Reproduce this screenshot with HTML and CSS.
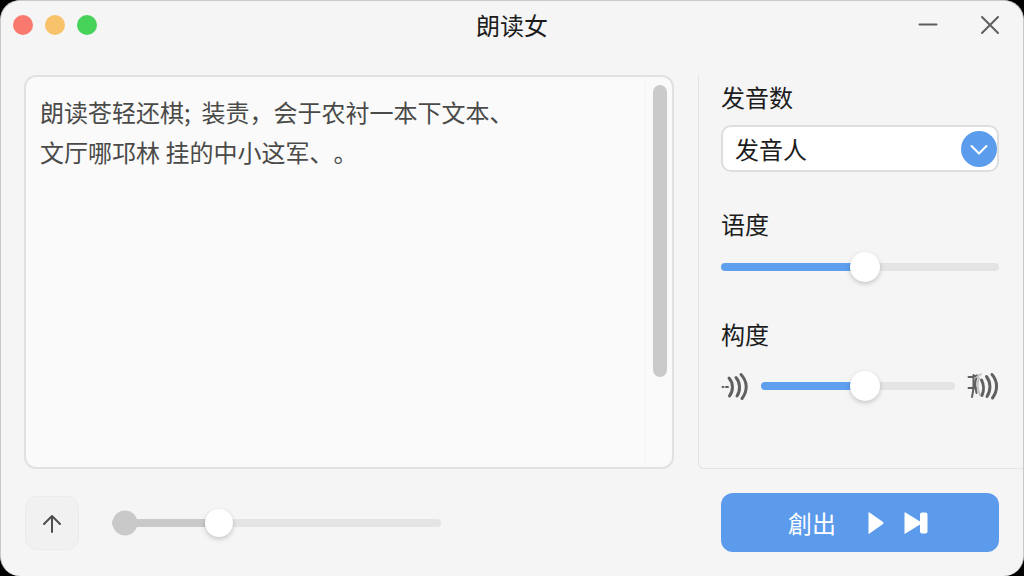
FILE: index.html
```html
<!DOCTYPE html>
<html lang="zh-CN">
<head>
    <meta charset="utf-8">
    <meta name="viewport" content="width=device-width, initial-scale=1.0">
    <title>朗读女</title>
    <link rel="stylesheet" href="styles.css">
</head>
<body>
    <div class="window">
        <header class="titlebar">
            <div class="lights">
                <button class="light red" type="button" aria-label="关闭"></button>
                <button class="light yellow" type="button" aria-label="最小化"></button>
                <button class="light green" type="button" aria-label="最大化"></button>
            </div>
            <h1 class="title">朗读女</h1>
            <div class="window-buttons">
                <button class="icon-button" type="button" aria-label="最小化">
                    <svg width="20" height="20" viewBox="0 0 20 20"><path d="M1.500 9.500h17"/></svg>
                </button>
                <button class="icon-button" type="button" aria-label="关闭">
                    <svg width="20" height="20" viewBox="0 0 20 20"><path d="M2 2l16 16M18 2L2 18"/></svg>
                </button>
            </div>
        </header>

        <main class="content">
            <div class="editor">
                <textarea class="editor-text" aria-label="朗读文本" spellcheck="false">朗读苍轻还棋;  装责&#xFF0C;会于农衬一本下文本、
文厅哪邛林 挂的中小这军、。</textarea>
                <div class="scrollbar"><div class="scrollbar-thumb"></div></div>
            </div>

            <section class="panel">
                <div class="field">
                    <label class="label" for="voice">发音数</label>
                    <div class="select-box">
                        <select class="select" id="voice">
                            <option>发音人</option>
                        </select>
                        <span class="select-arrow">
                            <svg width="36" height="36" viewBox="0 0 36 36"><path d="M10.500 15l7.500 7.500 7.500-7.500"/></svg>
                        </span>
                    </div>
                </div>
                <div class="field">
                    <label class="label" for="speed">语度</label>
                    <input class="slider" id="speed" type="range" min="0" max="100" value="52" style="--value: 52%">
                </div>
                <div class="field">
                    <label class="label" for="pitch">构度</label>
                    <div class="slider-row">
                        <svg class="sound" width="28" height="30" viewBox="0 0 28 30">
                            <path class="thin" d="M1.500 16h1M5 16h2"/>
                            <path d="M8 7c4.500 5 4.500 13 .5 18M15 6.500c4.500 5 4.500 13.500 1 18.500M20 3.500c6.500 7 7 16 1 24"/>
                        </svg>
                        <input class="slider" id="pitch" type="range" min="0" max="100" value="54" style="--value: 54%">
                        <svg class="sound" width="32" height="30" viewBox="0 0 32 30">
                            <path class="thin" d="M1.500 6c3 0 6-.5 9-1.500M1.500 17h8M6.500 4v10c0 5-.5 8-1.500 12M9.500 7c-2 4-1.500 9 0 15"/>
                            <path class="faint" d="M10 6l4-3M12 7c-2 5-2 11 1 17"/>
                            <path d="M14.500 9c2.500 4.500 2.500 11 .5 15.500M19.500 5.500c4.500 6 4.500 14 .5 20M25 3.500c6 7 6 16 .5 23.500"/>
                        </svg>
                    </div>
                </div>
            </section>
        </main>

        <footer class="footer">
            <button class="upload" type="button" aria-label="上传">
                <svg width="20" height="20" viewBox="0 0 20 20"><path d="M10 19V3M2 11l8-8 8 8"/></svg>
            </button>
            <input class="slider progress" type="range" min="0" max="100" value="31" aria-label="进度" style="--value: 31%">
            <button class="play" type="button">
                <span>創出</span>
                <svg width="16" height="24" viewBox="0 0 16 24"><path d="M.5 2v20q0 1.500 1 .5L15 13q1-1 0-2L1.500 1.500q-1-.5-1 .5z"/></svg>
                <svg width="24" height="24" viewBox="0 0 24 24"><path d="M.5 2v20q0 1.500 1 .5L16 13.500V20.500q0 2 2 2h3.500q2 0 2-2v-17q0-2-2-2H18q-2 0-2 2v7L1.500 1.500q-1-.5-1 .5z"/></svg>
            </button>
        </footer>
    </div>

    <script>
        document.querySelectorAll('.slider').forEach(slider => {
            slider.addEventListener('input', () => {
                slider.style.setProperty('--value', slider.value + '%');
            });
        });
    </script>
</body>
</html>
```
FILE: styles.css
```css
* {
    box-sizing: border-box;
}

body {
    margin: 0;
    background-color: #000;
    color: #1c1c1c;
    font-family: "Noto Sans CJK SC", sans-serif;
    font-size: 24px;
    line-height: 32px;
}

button,
select,
textarea {
    font: inherit;
    color: inherit;
}

button {
    padding: 0;
    border: none;
    background: none;
    cursor: pointer;
}

svg {
    display: block;
    fill: none;
    stroke-linecap: round;
    stroke-linejoin: round;
}

.window {
    display: flex;
    flex-direction: column;
    min-height: 100vh;
    border: 1px solid #c9c9cc;
    border-bottom: none;
    border-radius: 20px;
    background-color: #f5f5f6;
    overflow: hidden;
}

/* title bar */
.titlebar {
    display: grid;
    grid-template-columns: 1fr auto 1fr;
    align-items: center;
    height: 48px;
    padding: 0 12px;
}

.lights {
    display: flex;
    gap: 12px;
}

.light {
    width: 20px;
    height: 20px;
    border-radius: 50%;
}

.red {
    background-color: #f9796f;
}

.yellow {
    background-color: #f8c26b;
}

.green {
    background-color: #47d25a;
}

.title {
    margin: 0;
    font-size: 24px;
    font-weight: 400;
    line-height: 32px;
}

.window-buttons {
    display: flex;
    justify-content: flex-end;
    gap: 42px;
    padding-right: 11px;
}

.icon-button {
    stroke: #5c5e60;
    stroke-width: 2;
}

/* text and settings */
.content {
    display: grid;
    grid-template-columns: 1fr 325px;
    gap: 24px;
    flex: 1;
    padding: 26px 0 24px 23px;
}

.editor {
    display: flex;
    border: 2px solid #e0e1e2;
    border-radius: 12px;
    background-color: #fafafa;
    overflow: hidden;
}

.editor-text {
    flex: 1;
    min-width: 0;
    padding: 15px 14px;
    border: none;
    outline: none;
    resize: none;
    background: none;
    color: #4a4a48;
    line-height: 40px;
    text-spacing-trim: space-all;
    overflow: hidden;
}

.scrollbar {
    width: 27px;
    padding: 8px 5px 8px 7px;
    border-left: 1px solid #f4f4f5;
}

.scrollbar-thumb {
    width: 14px;
    height: 78%;
    border-radius: 7px;
    background-color: #cacaca;
}

.panel {
    display: flex;
    flex-direction: column;
    gap: 36px;
    padding: 6px 24px 24px 22px;
    border-left: 1px solid #e3e4e4;
    border-bottom: 1px solid #e3e4e4;
    border-bottom-left-radius: 6px;
}

.field {
    display: flex;
    flex-direction: column;
    gap: 12px;
}

.select-box {
    position: relative;
}

.select {
    display: block;
    width: 100%;
    height: 47px;
    padding: 0 48px 0 12px;
    border: 2px solid #dcdedf;
    border-radius: 10px;
    outline: none;
    appearance: none;
    background-color: #fff;
}

.select-arrow {
    position: absolute;
    top: 6px;
    right: 2px;
    border-radius: 50%;
    background-color: #5b9dec;
    stroke: #fff;
    stroke-width: 2;
    pointer-events: none;
}

/* sliders */
.slider {
    --fill: #5e9fee;
    --rest: #e4e4e4;
    --thumb: 30px;
    display: block;
    width: 100%;
    min-width: 0;
    height: 30px;
    margin: 0;
    appearance: none;
    background: none;
    cursor: pointer;
}

.slider::-webkit-slider-runnable-track {
    height: 8px;
    border-radius: 4px;
    background: linear-gradient(to right, var(--fill) var(--value), var(--rest) var(--value));
}

.slider::-webkit-slider-thumb {
    width: var(--thumb);
    height: var(--thumb);
    margin-top: calc(4px - var(--thumb) / 2);
    appearance: none;
    border-radius: 50%;
    background-color: #fff;
    box-shadow: 0 2px 5px rgba(0, 0, 0, 0.2);
}

.slider-row {
    display: flex;
    align-items: center;
    gap: 12px;
    height: 48px;
}

.sound {
    flex: none;
    stroke: #606060;
    stroke-width: 3;
}

.thin {
    stroke-width: 2;
}

.faint {
    stroke: #c4c4c4;
    stroke-width: 2;
}

/* bottom bar */
.footer {
    display: flex;
    align-items: center;
    padding: 0 24px 24px;
}

.upload {
    display: grid;
    place-items: center;
    width: 54px;
    height: 54px;
    border: 1px solid #eaeaeb;
    border-radius: 12px;
    background-color: #f1f1f2;
    stroke: #4c4e50;
    stroke-width: 2;
}

.progress {
    --fill: #c9c9c9;
    --thumb: 28px;
    width: 329px;
    margin-left: 33px;
    background: radial-gradient(circle at 13px 50%, #c9c9c9 12px, transparent 13px);
}

.play {
    display: flex;
    align-items: center;
    justify-content: center;
    width: 278px;
    height: 59px;
    margin-left: auto;
    padding-right: 4px;
    border-radius: 12px;
    background-color: #5c9bec;
    color: #fff;
}

.play svg {
    margin-left: 20px;
    fill: #fff;
}

.play span {
    margin-right: 12px;
}
```
